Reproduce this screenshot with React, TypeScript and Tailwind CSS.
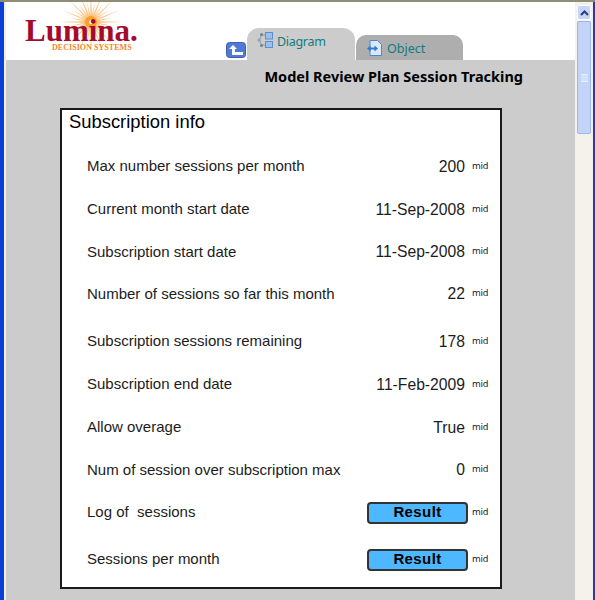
import React from 'react';

const rows = [
  { label: 'Max number sessions per month', value: '200', cls: 'h-[43px]' },
  { label: 'Current month start date', value: '11-Sep-2008', cls: 'h-[43px]' },
  { label: 'Subscription start date', value: '11-Sep-2008', cls: 'h-[42px]' },
  { label: 'Number of sessions so far this month', value: '22', cls: 'h-[42px]' },
  { label: 'Subscription sessions remaining', value: '178', cls: 'h-[43px] mt-[5px]' },
  { label: 'Subscription end date', value: '11-Feb-2009', cls: 'h-[43px]' },
  { label: 'Allow overage', value: 'True', cls: 'h-[43px]' },
  { label: 'Num of session over subscription max', value: '0', cls: 'h-[42px]' },
  { label: 'Log of\u00a0 sessions', button: true, cls: 'h-[43px]' },
  { label: 'Sessions per month', button: true, cls: 'h-[43px] mt-[4px]' },
];

function Sun() {
  const rays = Array.from({ length: 32 }, (_, i) => (i * Math.PI * 2) / 32);
  return (
    <svg width="76" height="50" viewBox="0 0 76 50" className="absolute left-[47px] top-0">
      {rays.map((a, i) => {
        const len = i % 2 === 0 ? 32 : 21;
        const x = 38 + Math.cos(a) * len;
        const y = 20 + Math.sin(a) * len;
        const nx = Math.cos(a + Math.PI / 2) * 1.2;
        const ny = Math.sin(a + Math.PI / 2) * 1.2;
        return <polygon key={i} points={`${38 + nx},${20 + ny} ${x},${y} ${38 - nx},${20 - ny}`} fill="#f9a94a" opacity="0.6" />;
      })}
      <circle cx="38" cy="20" r="6" fill="#f7a030" />
      <circle cx="38" cy="20" r="2" fill="#fff" />
    </svg>
  );
}

function Logo() {
  return (
    <div className="relative w-[150px] h-[58px] shrink-0">
      <Sun />
      <div className="absolute left-[19px] top-[16px] text-[31px] leading-[26px] font-bold text-[#a50b2c] font-['Liberation_Serif',serif]">
        Lumina.
      </div>
      <div className="absolute left-[46px] top-[42px] text-[8px] leading-[8px] font-bold text-[#f0872a] tracking-[0.05px] font-['Liberation_Serif',serif] whitespace-nowrap">
        DECISION SYSTEMS
      </div>
    </div>
  );
}

function BackIcon() {
  return (
    <svg width="20" height="16" viewBox="0 0 20 16" className="shrink-0">
      <rect x="0.5" y="0.5" width="19" height="15" rx="3" fill="#4f7bd4" stroke="#3d5fb4" />
      <path d="M7 3 11 7H9v3h8v3H6V7H3z" fill="#fff" />
    </svg>
  );
}

function DiagramIcon() {
  return (
    <svg width="16" height="16" viewBox="0 0 16 16" className="shrink-0">
      <rect x="8.5" y="0.5" width="7" height="6.5" fill="#9cc0ee" stroke="#5c8fcb" />
      <rect x="8.5" y="9.5" width="7" height="6" fill="#9cc0ee" stroke="#5c8fcb" />
      <path d="M8 3H4.5L2.5 8l2 5H8" fill="none" stroke="#8b96a3" />
      <circle cx="4.5" cy="2.5" r="1.5" fill="#77808c" />
      <circle cx="4.5" cy="13.5" r="1.5" fill="#77808c" />
      <circle cx="2" cy="8" r="1.5" fill="#8fa0b4" />
    </svg>
  );
}

function ObjectIcon() {
  return (
    <svg width="15" height="16" viewBox="0 0 15 16" className="shrink-0">
      <path d="M3 .5h7.5l4 4v11H3z" fill="#dbe8f8" stroke="#4d86cc" />
      <path d="M0 8.5 3.5 5.5v2h4v-2l3.5 3-3.5 3v-2h-4v2z" fill="#2f7bd6" />
    </svg>
  );
}

export default function App() {
  return (
    <div className="w-[595px] h-[600px] overflow-hidden flex flex-col bg-white font-['Liberation_Sans',sans-serif]">
      <div className="h-[2px] bg-[#8f8d78] shrink-0" />
      <div className="flex flex-1 min-h-0">
        <div className="w-[4px] bg-[#0a3fd8] shrink-0" />
        <div className="w-[2px] bg-[#f2efe4] shrink-0" />

        <div className="flex-1 min-w-0 flex flex-col">
          <div className="h-[58px] bg-white flex items-end shrink-0">
            <Logo />
            <div className="ml-[70px] mb-[2px]">
              <BackIcon />
            </div>
            <div className="ml-[1px] w-[108px] h-[32px] bg-[#cccccc] rounded-t-[12px] flex items-start gap-[4px] pl-[10px] pt-[4px] text-[12.5px] leading-[17px] text-[#0f7c80] font-['Noto_Sans',sans-serif]">
              <DiagramIcon />
              <span className="mt-[1px] tracking-[-0.3px]">Diagram</span>
            </div>
            <div className="ml-[1px] w-[107px] h-[25px] bg-[#aeaeae] rounded-t-[10px] flex items-start gap-[5px] pl-[11px] pt-[5px] text-[12.5px] leading-[17px] text-[#0f7c80] font-['Noto_Sans',sans-serif]">
              <ObjectIcon />
              <span>Object</span>
            </div>
          </div>

          <div className="flex-1 min-h-0 bg-[#cccccc] pl-[54px]">
            <div className="w-[463px] pt-[6px] h-[48px] text-right">
              <div className="text-[14.5px] leading-[20px] font-bold text-black font-['Noto_Sans',sans-serif] whitespace-nowrap">
                Model Review Plan Session Tracking
              </div>
            </div>
            <div className="w-[442px] h-[481px] bg-white border-2 border-[#1a1a1a] pl-[7px]">
              <div className="text-[18.4px] leading-[22px] text-black h-[35px] pt-[1px]">Subscription info</div>
              <div className="pl-[18px]">
                {rows.map((r) => (
                  <div key={r.label} className={`flex items-center ${r.cls}`}>
                    <div className="flex-1 text-[15px] text-[#1c1c1c] whitespace-nowrap">{r.label}</div>
                    {r.button ? (
                      <div className="w-[101px] h-[22px] mr-[4px] rounded-[4px] border-2 border-[#333] bg-[#4db8ff] text-[15px] leading-[16px] tracking-[0.4px] font-bold text-black text-center">
                        Result
                      </div>
                    ) : (
                      <div className="text-[15.7px] text-[#1c1c1c] mr-[7px] whitespace-nowrap">{r.value}</div>
                    )}
                    <div className="w-[21px] text-[9px] text-[#222] font-['DejaVu_Sans',sans-serif] tracking-[-0.2px] shrink-0 mr-[7px]">mid</div>
                  </div>
                ))}
              </div>
            </div>
          </div>
        </div>

        <div className="w-[17px] bg-[#f4f2ea] shrink-0 flex flex-col items-start pl-[2px] pt-[3px] gap-[1px]">
          <div className="w-[14px] h-[15px] rounded-[2px] bg-[#c5d6f8] border border-white flex items-center justify-center">
            <svg width="9" height="6" viewBox="0 0 9 6">
              <path d="M1 5 4.5 1.5 8 5" fill="none" stroke="#2a3f75" strokeWidth="2" />
            </svg>
          </div>
          <div className="w-[14px] h-[113px] rounded-[2px] bg-[#c3d4f9] border border-[#9db5ec] flex items-center justify-center">
            <div className="w-[7px] h-[8px] border-y border-[#e8eefc] bg-[#d5e1fb]" />
          </div>
        </div>
        <div className="w-[1px] bg-[#f2efe4] shrink-0" />
        <div className="w-[2px] bg-[#0a3fd8] shrink-0" />
      </div>
    </div>
  );
}
